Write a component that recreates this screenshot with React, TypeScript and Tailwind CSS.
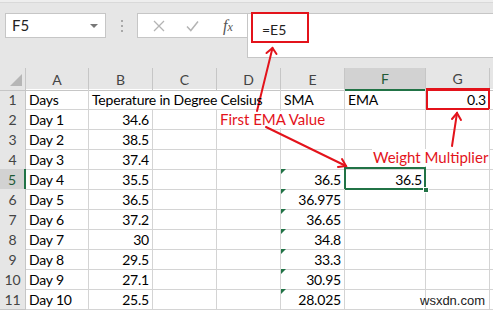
import React from "react";

type Row = { n: number; a: string; b: string; e?: string; f?: string; g?: string };

const rows: Row[] = [
  { n: 1, a: "Days", b: "Teperature in Degree Celsius", e: "SMA", f: "EMA", g: "0.3" },
  { n: 2, a: "Day 1", b: "34.6" },
  { n: 3, a: "Day 2", b: "38.5" },
  { n: 4, a: "Day 3", b: "37.4" },
  { n: 5, a: "Day 4", b: "35.5", e: "36.5", f: "36.5" },
  { n: 6, a: "Day 5", b: "36.5", e: "36.975" },
  { n: 7, a: "Day 6", b: "37.2", e: "36.65" },
  { n: 8, a: "Day 7", b: "30", e: "34.8" },
  { n: 9, a: "Day 8", b: "29.5", e: "33.3" },
  { n: 10, a: "Day 9", b: "27.1", e: "30.95" },
  { n: 11, a: "Day 10", b: "25.5", e: "28.025" },
];

const gridCols = "grid grid-cols-[26px_63px_64px_64px_64px_64px_81px_64px_1fr]";

function GreenTri() {
  return (
    <span className="absolute left-0 top-0 w-0 h-0 border-t-[5px] border-t-[#217346] border-r-[5px] border-r-transparent" />
  );
}

export default function App() {
  const headers = ["A", "B", "C", "D", "E", "F", "G"];
  return (
    <div className="relative w-[493px] h-[310px] overflow-hidden bg-[#e6e6e6] font-['Lato',sans-serif]">
      {/* toolbar */}
      <div className="h-[3px] bg-[#eeeeee] border-b border-[#d9d9d9]" />
      <div className="flex items-start h-[65px] pt-[10px] pl-[5px]">
        <div className="relative w-[101px] h-[25px] bg-white border border-[#c6c6c6] flex items-center pl-[6px] text-[15px] text-[#222]">
          F5
          <span className="absolute right-[7px] top-[10px] w-0 h-0 border-l-[4px] border-r-[4px] border-t-[4px] border-l-transparent border-r-transparent border-t-[#777]" />
        </div>
        <div className="w-[31px] h-[25px] flex flex-col items-center justify-center gap-[3px]">
          <span className="w-[2px] h-[2px] bg-[#a8a8a8]" />
          <span className="w-[2px] h-[2px] bg-[#a8a8a8]" />
          <span className="w-[2px] h-[2px] bg-[#a8a8a8]" />
        </div>
        <div className="w-[110px] h-[25px] bg-white border border-[#c6c6c6] border-r-0 flex items-center">
          <svg width="12" height="12" viewBox="0 0 12 12" className="ml-[15px]">
            <path d="M1 1 L11 11 M11 1 L1 11" stroke="#b4b4b4" strokeWidth="1.3" fill="none" />
          </svg>
          <svg width="13" height="12" viewBox="0 0 13 12" className="ml-[21px]">
            <path d="M1 6.5 L4.8 10.5 L12 1.5" stroke="#b4b4b4" strokeWidth="1.5" fill="none" />
          </svg>
          <span className="ml-[24px] font-['Liberation_Serif',serif] italic text-[16px] text-[#555] leading-none">
            f<span className="text-[12px]">x</span>
          </span>
        </div>
        <div className="relative flex-1 h-[45px] bg-white border border-[#c6c6c6] border-r-0">
          <div className="absolute left-[3px] top-[-2px] w-[58px] h-[31px] border-2 border-[#e3131b]" />
          <span className="absolute left-[14px] top-[5px] text-[14px] text-[#222]">=E5</span>
        </div>
      </div>

      {/* sheet */}
      <div className="bg-white">
        {/* header row */}
        <div className={`${gridCols} h-[21px] bg-[#e6e6e6]`}>
          <div className="relative border-r border-b border-[#c6c6c6]">
            <svg width="26" height="21" viewBox="0 0 26 21" className="absolute left-0 top-0">
              <path d="M10 18 L22 6 L22 18 Z" fill="#b6b6b6" />
            </svg>
          </div>
          {headers.map((h) => (
            <div
              key={h}
              className={
                h === "F"
                  ? "flex items-center justify-center bg-[#d2d2d2] border-r border-[#c6c6c6] border-b-2 border-b-[#217346] text-[14px] text-[#1f5a37]"
                  : h === "G"
                  ? "flex items-center justify-center border-r border-[#c6c6c6] border-b-2 border-b-[#e3131b] text-[14px] text-[#444]"
                  : "flex items-center justify-center border-r border-b border-[#c6c6c6] text-[14px] text-[#444]"
              }
            >
              {h}
            </div>
          ))}
          <div className="border-b border-[#c6c6c6]" />
        </div>

        {rows.map((r) => (
          <div key={r.n} className={`${gridCols} h-[20px] text-[14px] tracking-[-0.2px] leading-[19px] pt-[1px] text-black`}>
            <div
              className={
                r.n === 5
                  ? "-mt-[1px] flex items-center justify-center bg-[#d2d2d2] border-r-2 border-r-[#217346] border-b border-[#c6c6c6] text-[14px] text-[#1f5a37]"
                  : "-mt-[1px] flex items-center justify-center bg-[#e6e6e6] border-r border-b border-[#c6c6c6] text-[14px] text-[#444]"
              }
            >
              {r.n}
            </div>
            <div className="-mt-[1px] pt-[1px] border-r border-b border-[#d4d4d4] pl-[3px] whitespace-nowrap">{r.a}</div>
            <div
              className={
                r.n === 1
                  ? "-mt-[1px] pt-[1px] relative z-10 border-b border-[#d4d4d4] pl-[3px] whitespace-nowrap overflow-visible"
                  : "-mt-[1px] pt-[1px] border-r border-b border-[#d4d4d4] pr-[3px] text-right"
              }
            >
              {r.b}
            </div>
            <div className={r.n === 1 ? "-mt-[1px] border-b border-[#d4d4d4]" : "-mt-[1px] border-r border-b border-[#d4d4d4]"} />
            <div className="-mt-[1px] border-r border-b border-[#d4d4d4]" />
            <div
              className={
                r.n === 1
                  ? "-mt-[1px] pt-[1px] border-r border-b border-[#d4d4d4] pl-[3px]"
                  : "-mt-[1px] pt-[1px] relative border-r border-b border-[#d4d4d4] pr-[3px] text-right"
              }
            >
              {r.n >= 5 && <GreenTri />}
              {r.e}
            </div>
            <div
              className={
                r.n === 1
                  ? "-mt-[1px] pt-[1px] border-r border-b border-[#d4d4d4] pl-[3px]"
                  : "-mt-[1px] pt-[1px] relative border-r border-b border-[#d4d4d4] pr-[3px] text-right"
              }
            >
              {r.n === 5 && (
                <>
                  <span className="absolute left-[-1px] top-[-2px] right-[-1px] bottom-[-1px] border-2 border-[#217346]" />
                  <span className="absolute right-[-4px] bottom-[-4px] w-[6px] h-[6px] bg-[#217346] border border-white z-10" />
                </>
              )}
              {r.f}
            </div>
            <div className="-mt-[1px] pt-[1px] relative border-r border-b border-[#d4d4d4] pr-[3px] text-right">
              {r.n === 1 && (
                <span className="absolute left-[0px] top-[-1px] right-[-1px] bottom-[-1px] border-2 border-[#e3131b]" />
              )}
              {r.g}
            </div>
            <div className="-mt-[1px] border-b border-[#d4d4d4]" />
          </div>
        ))}
      </div>

      {/* annotations */}
      <span className="absolute left-[219px] top-[111px] bg-white px-[1px] whitespace-nowrap text-[15px] leading-[17px] text-[#e3131b]">
        First EMA Value
      </span>
      <span className="absolute left-[372px] top-[149px] bg-white px-[1px] whitespace-nowrap text-[15px] leading-[17px] text-[#e3131b]">
        Weight Multiplier
      </span>
      <svg className="absolute left-0 top-0 pointer-events-none" width="493" height="310" viewBox="0 0 493 310">
        <g stroke="#e3131b" strokeWidth="2" fill="none" strokeLinecap="round">
          <path d="M257 111 L272.5 48" />
          <path d="M266.5 53 L272.5 48 L276.5 54" />
          <path d="M266 127 L346 166" />
          <path d="M338 167 L346 166 L342 159" />
          <path d="M452 146 L457 113" />
          <path d="M452 119 L457 113 L461 120" />
        </g>
      </svg>

      <span className="absolute left-[420px] top-[291px] font-['Liberation_Sans',sans-serif] text-[13px] text-[#222]">
        wsxdn.com
      </span>
    </div>
  );
}
